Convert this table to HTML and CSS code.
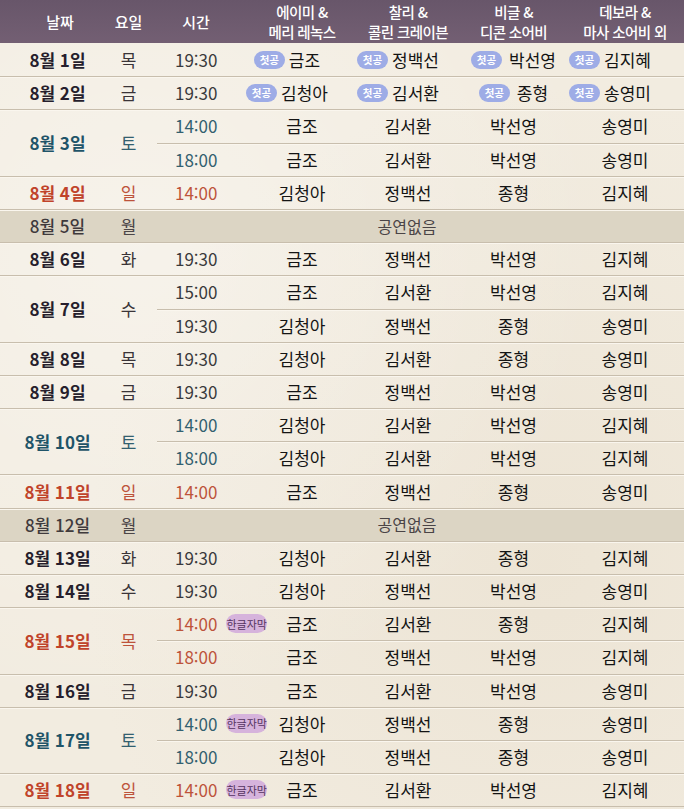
FILE: index.html
```html
<!DOCTYPE html>
<html lang="ko">
<head>
<meta charset="utf-8">
<title>공연 일정</title>
<link rel="stylesheet" href="styles.css">
</head>
<body>
<div class="schedule">
  <div class="head">
    <div class="h-date">날짜</div>
    <div class="h-dow">요일</div>
    <div class="h-time">시간</div>
    <div class="h-cast">에이미 &amp;<br>메리 레녹스</div>
    <div class="h-cast">찰리 &amp;<br>콜린 크레이븐</div>
    <div class="h-cast">비글 &amp;<br>디콘 소어비</div>
    <div class="h-cast">데보라 &amp;<br>마사 소어비 외</div>
  </div>

  <div class="day">
    <div class="date">8월 1일</div><div class="dow">목</div>
    <div class="shows">
      <div class="show"><div class="time">19:30</div>
        <div class="cast c1"><span class="first">첫공</span><span>금조</span></div>
        <div class="cast c2"><span class="first">첫공</span><span>정백선</span></div>
        <div class="cast c3"><span class="first">첫공</span><span>박선영</span></div>
        <div class="cast c4"><span class="first">첫공</span><span>김지혜</span></div></div>
    </div>
  </div>

  <div class="day">
    <div class="date">8월 2일</div><div class="dow">금</div>
    <div class="shows">
      <div class="show"><div class="time">19:30</div>
        <div class="cast c1"><span class="first">첫공</span><span>김청아</span></div>
        <div class="cast c2"><span class="first">첫공</span><span>김서환</span></div>
        <div class="cast c3"><span class="first">첫공</span><span>종형</span></div>
        <div class="cast c4"><span class="first">첫공</span><span>송영미</span></div></div>
    </div>
  </div>

  <div class="day sat">
    <div class="date">8월 3일</div><div class="dow">토</div>
    <div class="shows">
      <div class="show"><div class="time">14:00</div><div class="cast">금조</div><div class="cast">김서환</div><div class="cast">박선영</div><div class="cast">송영미</div></div>
      <div class="show"><div class="time">18:00</div><div class="cast">금조</div><div class="cast">김서환</div><div class="cast">박선영</div><div class="cast">송영미</div></div>
    </div>
  </div>

  <div class="day sun">
    <div class="date">8월 4일</div><div class="dow">일</div>
    <div class="shows">
      <div class="show"><div class="time">14:00</div><div class="cast">김청아</div><div class="cast">정백선</div><div class="cast">종형</div><div class="cast">김지혜</div></div>
    </div>
  </div>

  <div class="day rest">
    <div class="date">8월 5일</div><div class="dow">월</div>
    <div class="shows"><div class="none">공연없음</div></div>
  </div>

  <div class="day">
    <div class="date">8월 6일</div><div class="dow">화</div>
    <div class="shows">
      <div class="show"><div class="time">19:30</div><div class="cast">금조</div><div class="cast">정백선</div><div class="cast">박선영</div><div class="cast">김지혜</div></div>
    </div>
  </div>

  <div class="day">
    <div class="date">8월 7일</div><div class="dow">수</div>
    <div class="shows">
      <div class="show"><div class="time">15:00</div><div class="cast">금조</div><div class="cast">김서환</div><div class="cast">박선영</div><div class="cast">김지혜</div></div>
      <div class="show"><div class="time">19:30</div><div class="cast">김청아</div><div class="cast">정백선</div><div class="cast">종형</div><div class="cast">송영미</div></div>
    </div>
  </div>

  <div class="day">
    <div class="date">8월 8일</div><div class="dow">목</div>
    <div class="shows">
      <div class="show"><div class="time">19:30</div><div class="cast">김청아</div><div class="cast">김서환</div><div class="cast">종형</div><div class="cast">송영미</div></div>
    </div>
  </div>

  <div class="day">
    <div class="date">8월 9일</div><div class="dow">금</div>
    <div class="shows">
      <div class="show"><div class="time">19:30</div><div class="cast">금조</div><div class="cast">정백선</div><div class="cast">박선영</div><div class="cast">송영미</div></div>
    </div>
  </div>

  <div class="day sat">
    <div class="date">8월 10일</div><div class="dow">토</div>
    <div class="shows">
      <div class="show"><div class="time">14:00</div><div class="cast">김청아</div><div class="cast">김서환</div><div class="cast">박선영</div><div class="cast">김지혜</div></div>
      <div class="show"><div class="time">18:00</div><div class="cast">김청아</div><div class="cast">김서환</div><div class="cast">박선영</div><div class="cast">김지혜</div></div>
    </div>
  </div>

  <div class="day sun">
    <div class="date">8월 11일</div><div class="dow">일</div>
    <div class="shows">
      <div class="show"><div class="time">14:00</div><div class="cast">금조</div><div class="cast">정백선</div><div class="cast">종형</div><div class="cast">송영미</div></div>
    </div>
  </div>

  <div class="day rest">
    <div class="date">8월 12일</div><div class="dow">월</div>
    <div class="shows"><div class="none">공연없음</div></div>
  </div>

  <div class="day">
    <div class="date">8월 13일</div><div class="dow">화</div>
    <div class="shows">
      <div class="show"><div class="time">19:30</div><div class="cast">김청아</div><div class="cast">김서환</div><div class="cast">종형</div><div class="cast">김지혜</div></div>
    </div>
  </div>

  <div class="day">
    <div class="date">8월 14일</div><div class="dow">수</div>
    <div class="shows">
      <div class="show"><div class="time">19:30</div><div class="cast">김청아</div><div class="cast">정백선</div><div class="cast">박선영</div><div class="cast">송영미</div></div>
    </div>
  </div>

  <div class="day sun">
    <div class="date">8월 15일</div><div class="dow">목</div>
    <div class="shows">
      <div class="show"><div class="time"><span>14:00</span><span class="sub">한글자막</span></div><div class="cast">금조</div><div class="cast">김서환</div><div class="cast">종형</div><div class="cast">김지혜</div></div>
      <div class="show"><div class="time">18:00</div><div class="cast">금조</div><div class="cast">정백선</div><div class="cast">박선영</div><div class="cast">김지혜</div></div>
    </div>
  </div>

  <div class="day">
    <div class="date">8월 16일</div><div class="dow">금</div>
    <div class="shows">
      <div class="show"><div class="time">19:30</div><div class="cast">금조</div><div class="cast">김서환</div><div class="cast">박선영</div><div class="cast">송영미</div></div>
    </div>
  </div>

  <div class="day sat">
    <div class="date">8월 17일</div><div class="dow">토</div>
    <div class="shows">
      <div class="show"><div class="time"><span>14:00</span><span class="sub">한글자막</span></div><div class="cast">김청아</div><div class="cast">정백선</div><div class="cast">종형</div><div class="cast">송영미</div></div>
      <div class="show"><div class="time">18:00</div><div class="cast">김청아</div><div class="cast">정백선</div><div class="cast">종형</div><div class="cast">송영미</div></div>
    </div>
  </div>

  <div class="day sun">
    <div class="date">8월 18일</div><div class="dow">일</div>
    <div class="shows">
      <div class="show"><div class="time"><span>14:00</span><span class="sub">한글자막</span></div><div class="cast">금조</div><div class="cast">김서환</div><div class="cast">박선영</div><div class="cast">김지혜</div></div>
    </div>
  </div>
  <div class="foot"></div>
</div>
</body>
</html>
```

FILE: styles.css
```css
* {
  box-sizing: border-box;
  margin: 0;
  padding: 0;
}

html, body {
  margin: 0;
  width: 684px;
  height: 809px;
  overflow: hidden;
}

body {
  font-family: "Noto Sans CJK KR", "Noto Sans", sans-serif;
  color: #1b1a1c;
  background-color: #f2ece0;
  background-image:
    radial-gradient(ellipse at 20% 30%, rgba(255, 255, 255, 0.35), rgba(255, 255, 255, 0) 60%),
    radial-gradient(ellipse at 80% 70%, rgba(220, 205, 180, 0.25), rgba(220, 205, 180, 0) 60%);
}

.schedule {
  width: 684px;
}

.head {
  display: grid;
  grid-template-columns: 100px 57px 92px 106px 106px 105px 118px;
  height: 43px;
  align-items: center;
  background: linear-gradient(#68566a, #735f73);
  color: #ffffff;
}

.head div {
  text-align: center;
  font-size: 15px;
  font-weight: 500;
  line-height: 20px;
}

.head .h-date {
  padding-left: 20px;
}

.head .h-time {
  padding-right: 14px;
}

.head .h-cast {
  font-size: 14.5px;
  letter-spacing: -0.6px;
  white-space: nowrap;
}

.day {
  display: flex;
  box-shadow: inset 0 1px 0 #c8bead, inset 0 2px 0 #faf6ee;
}

.day:nth-child(2) {
  box-shadow: none;
}

.date {
  width: 100px;
  flex: none;
  padding-left: 15px;
  display: flex;
  align-items: center;
  justify-content: center;
  font-size: 17px;
  font-weight: 700;
  color: #261e2c;
  white-space: nowrap;
}

.dow {
  width: 57px;
  flex: none;
  display: flex;
  align-items: center;
  justify-content: center;
  font-size: 17px;
  color: #3a3438;
}

.shows {
  flex: 1;
}

.show {
  display: grid;
  grid-template-columns: 92px 106px 106px 105px 118px;
  height: 33.2px;
  align-items: center;
}

.show + .show {
  box-shadow: inset 0 1px 0 #c8bead, inset 0 2px 0 #faf6ee;
}

.time {
  display: flex;
  align-items: center;
  padding-left: 18px;
  font-size: 17px;
  color: #3a3a3c;
  white-space: nowrap;
}

.cast {
  display: flex;
  align-items: center;
  justify-content: center;
  font-size: 17px;
  color: #141414;
  white-space: nowrap;
}

.first {
  display: inline-flex;
  align-items: center;
  justify-content: center;
  width: 31px;
  height: 18px;
  border-radius: 9px;
  background: #9eace6;
  color: #ffffff;
  font-size: 10.5px;
  font-weight: 700;
  margin-left: -30px;
  margin-right: 4px;
}

.c2 .first {
  margin-left: -20px;
}

.c3 .first {
  margin-left: 0;
  margin-right: 7px;
}

.sub {
  display: inline-flex;
  align-items: center;
  justify-content: center;
  width: 49px;
  height: 19px;
  border-radius: 10px;
  background: #d6b3dc;
  color: #553460;
  font-size: 11px;
  margin-left: 9px;
}

.sat .date {
  color: #1f5468;
}

.sat .dow,
.sat .time {
  color: #33606f;
}

.sun .date {
  color: #c0432a;
}

.sun .dow,
.sun .time {
  color: #bd533b;
}

.rest {
  background: #dcd5c4;
}

.rest .date {
  color: #3f3a3c;
  font-weight: 500;
}

.rest .dow {
  color: #4c4648;
}

.none {
  height: 33.2px;
  display: flex;
  align-items: center;
  justify-content: center;
  padding-right: 27px;
  font-size: 16px;
  color: #4a4446;
}

.foot {
  height: 3px;
  box-shadow: inset 0 1px 0 #c8bead;
}
```
